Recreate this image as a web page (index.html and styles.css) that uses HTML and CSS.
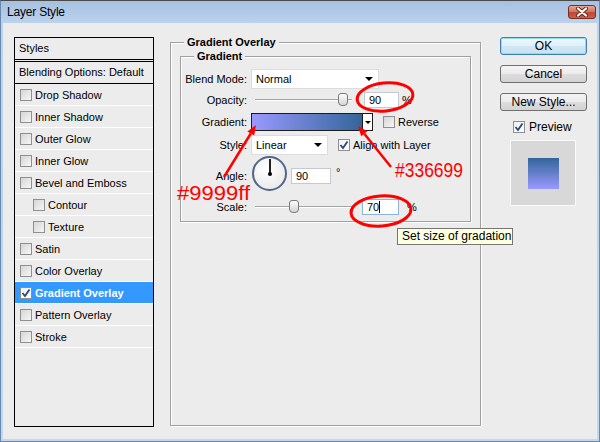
FILE: index.html
```html
<!DOCTYPE html>
<html lang="en">
<head>
  <meta charset="UTF-8">
  <title>Layer Style</title>
  <link rel="stylesheet" href="styles.css">
</head>
<body>

  <div class="window">
    <div class="titlebar">
      <span class="title">Layer Style</span>
      <div class="close-button">
        <svg width="14" height="10" viewBox="0 0 14 10">
          <path d="M3 1.5 L11 8.5 M11 1.5 L3 8.5" stroke="#6b2418" stroke-width="4" stroke-linecap="round"/>
          <path d="M3 1.5 L11 8.5 M11 1.5 L3 8.5" stroke="#ffffff" stroke-width="2.2" stroke-linecap="round"/>
        </svg>
      </div>
    </div>

    <div class="dialog-body">

      <div class="styles-list">
        <div class="list-head">Styles</div>
        <div class="list-blending">Blending Options: Default</div>
        <div class="list-row"><span class="checkbox"></span>Drop Shadow</div>
        <div class="list-row"><span class="checkbox"></span>Inner Shadow</div>
        <div class="list-row"><span class="checkbox"></span>Outer Glow</div>
        <div class="list-row"><span class="checkbox"></span>Inner Glow</div>
        <div class="list-row"><span class="checkbox"></span>Bevel and Emboss</div>
        <div class="list-row sub-row"><span class="checkbox"></span>Contour</div>
        <div class="list-row sub-row"><span class="checkbox"></span>Texture</div>
        <div class="list-row"><span class="checkbox"></span>Satin</div>
        <div class="list-row"><span class="checkbox"></span>Color Overlay</div>
        <div class="list-row selected">
          <span class="checkbox checked">
            <svg width="10" height="10" viewBox="0 0 10 10"><path d="M1.5 5 L4 8 L8.5 1.5" fill="none" stroke="#27497a" stroke-width="1.8"/></svg>
          </span>Gradient Overlay
        </div>
        <div class="list-row"><span class="checkbox"></span>Pattern Overlay</div>
        <div class="list-row"><span class="checkbox"></span>Stroke</div>
      </div>

      <fieldset class="group outer-group">
        <legend>Gradient Overlay</legend>

        <fieldset class="group inner-group">
          <legend>Gradient</legend>

          <div class="field-row row-blend">
            <span class="field-label">Blend Mode:</span>
            <div class="select select-blend">Normal<span class="arrow"></span></div>
          </div>

          <div class="field-row row-opacity">
            <span class="field-label">Opacity:</span>
            <div class="slider"><span class="thumb" style="left: 83px;"></span></div>
            <div class="text-input input-opacity">90</div>
            <span class="unit">%</span>
          </div>

          <div class="field-row row-gradient">
            <span class="field-label">Gradient:</span>
            <div class="gradient-swatch"></div>
            <div class="swatch-arrow"><span class="arrow small"></span></div>
            <span class="checkbox check-reverse"></span>
            <span>Reverse</span>
          </div>

          <div class="field-row row-style">
            <span class="field-label">Style:</span>
            <div class="select select-style">Linear<span class="arrow"></span></div>
            <span class="checkbox checked check-align">
              <svg width="10" height="10" viewBox="0 0 10 10"><path d="M1.5 5 L4 8 L8.5 1.5" fill="none" stroke="#27497a" stroke-width="1.8"/></svg>
            </span>
            <span>Align with Layer</span>
          </div>

          <div class="field-row row-angle">
            <span class="field-label">Angle:</span>
            <div class="dial"><span class="needle"></span><span class="hub"></span></div>
            <div class="text-input input-angle">90</div>
            <span class="degree">°</span>
          </div>

          <div class="field-row row-scale">
            <span class="field-label">Scale:</span>
            <div class="slider"><span class="thumb" style="left: 34px;"></span></div>
            <div class="text-input input-scale">70<span class="caret"></span></div>
            <span class="unit unit-scale">%</span>
          </div>
        </fieldset>
      </fieldset>

      <div class="actions">
        <div class="btn btn-default">OK</div>
        <div class="btn">Cancel</div>
        <div class="btn">New Style...</div>
        <div class="preview-toggle">
          <span class="checkbox checked">
            <svg width="10" height="10" viewBox="0 0 10 10"><path d="M1.5 5 L4 8 L8.5 1.5" fill="none" stroke="#27497a" stroke-width="1.8"/></svg>
          </span>
          Preview
        </div>
        <div class="preview-box"><div class="preview-swatch"></div></div>
      </div>

    </div>
  </div>

  <div class="tooltip">Set size of gradation</div>

  <!-- red notes drawn over the dialog -->
  <svg class="marks" width="600" height="442" viewBox="0 0 600 442">
    <g fill="none" stroke="#ff0000" stroke-width="3">
      <ellipse cx="385" cy="97" rx="28" ry="14" transform="rotate(-6 385 97)"/>
      <ellipse cx="381" cy="211" rx="30" ry="15" transform="rotate(-4 381 211)"/>
    </g>
    <g stroke="#ff0000" stroke-width="2.5">
      <line x1="224" y1="177" x2="250.8" y2="133.5"/>
      <line x1="391" y1="167" x2="364.3" y2="133.8"/>
    </g>
    <g fill="#ff0000">
      <polygon points="256,125 254.2,135.6 247.4,131.4"/>
      <polygon points="358,126 367.4,131.3 361.2,136.3"/>
    </g>
    <g fill="#ff0000" font-family="Liberation Sans, Arial, sans-serif" font-size="21">
      <text x="177" y="200" textLength="73" lengthAdjust="spacingAndGlyphs">#9999ff</text>
      <text x="395" y="177" textLength="68" lengthAdjust="spacingAndGlyphs">#336699</text>
    </g>
  </svg>

</body>
</html>
```

FILE: styles.css
```css
body {
  margin: 0;
  font-family: "Liberation Sans", Arial, sans-serif;
  font-size: 11px;
  color: #000;
}

.window {
  width: 600px;
  height: 442px;
  box-sizing: border-box;
  border: 1px solid #6a87ad;
  border-top-color: #4a4a4a;
  padding: 0 2px 2px 2px;
  background: linear-gradient(#a6c0e0, #bcd3ed 22px, #c3d8ef);
  display: flex;
  flex-direction: column;
}

.titlebar {
  height: 22px;
  flex: none;
  display: flex;
  align-items: center;
  justify-content: space-between;
  padding: 0 1px 0 4px;
}

.title {
  font-size: 12px;
  letter-spacing: -0.2px;
  color: #000;
}

.close-button {
  width: 28px;
  height: 14px;
  box-sizing: border-box;
  border: 1px solid #7a2e22;
  border-radius: 3px;
  background: linear-gradient(#e6a797, #d0705d 50%, #bf4632 55%, #c9624c);
  display: flex;
  align-items: center;
  justify-content: center;
}

.dialog-body {
  flex: 1;
  background-color: #ececec;
  display: flex;
  align-items: flex-start;
  padding: 14px 0 0 11px;
}

/* left list of styles */

.styles-list {
  width: 140px;
  height: 390px;
  box-sizing: border-box;
  border: 1px solid #000;
  flex: none;
}

.list-head {
  height: 21px;
  line-height: 21px;
  padding-left: 4px;
  border-bottom: 3px double #000;
}

.list-blending {
  height: 21px;
  line-height: 21px;
  padding-left: 4px;
  border-bottom: 1px solid #000;
}

.list-row {
  height: 21px;
  display: flex;
  align-items: center;
  padding-left: 5px;
  border-bottom: 1px solid #fff;
}

.list-row .checkbox {
  margin-right: 3px;
}

.sub-row {
  padding-left: 18px;
}

.list-row.selected {
  background-color: #3399ff;
  color: #fff;
  font-weight: bold;
}

.checkbox {
  width: 12px;
  height: 12px;
  box-sizing: border-box;
  border: 1px solid #8e8f8f;
  background: linear-gradient(135deg, #d6d6d6, #f6f6f6);
  display: inline-flex;
  align-items: center;
  justify-content: center;
  flex: none;
}

.checkbox.checked {
  background: linear-gradient(135deg, #f0f0f0, #ffffff);
}

/* middle group boxes */

.group {
  margin: 0;
  box-sizing: border-box;
  min-inline-size: 0;
  border: 1px solid #a0a0a0;
  box-shadow: 1px 1px 0 #fff, inset 1px 1px 0 #fff;
}

.group legend {
  font-weight: bold;
  line-height: 13px;
  padding: 0 3px;
  background-color: #ececec;
}

.outer-group {
  width: 311px;
  height: 390px;
  margin: -1px 0 0 16px;
  padding: 1px 9px 0 9px;
}

.outer-group > legend {
  margin-left: 4px;
}

.inner-group {
  width: 291px;
  padding: 6px 0 2px 0;
}

.inner-group > legend {
  margin-left: 13px;
}

.field-row {
  display: flex;
  align-items: center;
}

.row-blend { height: 20px; }
.row-opacity { height: 22px; }
.row-gradient { height: 22px; }
.row-style { height: 24px; }
.row-angle { height: 38px; }
.row-scale { height: 24px; }

.field-label {
  width: 66px;
  text-align: right;
  margin-right: 4px;
  flex: none;
}

.select {
  height: 20px;
  box-sizing: border-box;
  border: 1px solid #dcdcdc;
  background-color: #fff;
  padding-left: 4px;
  display: flex;
  align-items: center;
  justify-content: space-between;
}

.select-blend {
  width: 128px;
}

.select-style {
  width: 77px;
  margin-right: 10px;
}

.arrow {
  width: 0;
  height: 0;
  border-left: 4px solid transparent;
  border-right: 4px solid transparent;
  border-top: 4px solid #000;
  margin-right: 5px;
}

.arrow.small {
  border-left-width: 3px;
  border-right-width: 3px;
  border-top-width: 3px;
  margin: 0;
}

.slider {
  position: relative;
  width: 97px;
  height: 14px;
  margin-left: 4px;
  flex: none;
}

.slider::before {
  content: "";
  position: absolute;
  left: 0;
  right: 0;
  top: 6px;
  height: 1px;
  background-color: #a3a3a3;
  border-bottom: 1px solid #fff;
}

.thumb {
  position: absolute;
  top: 0;
  width: 10px;
  height: 13px;
  box-sizing: border-box;
  border: 1px solid #7a7a7a;
  border-radius: 3px 3px 4px 4px;
  background: linear-gradient(#fdfdfd, #d4d4d4);
}

.text-input {
  height: 16px;
  box-sizing: border-box;
  border: 1px solid #c5cad2;
  background-color: #fff;
  padding-left: 4px;
  line-height: 14px;
  flex: none;
}

.input-opacity {
  width: 35px;
  margin-left: 12px;
}

.unit {
  margin-left: 3px;
}

.input-angle {
  width: 40px;
  margin-left: 4px;
}

.degree {
  align-self: flex-start;
  margin: 9px 0 0 5px;
}

.input-scale {
  width: 37px;
  margin-left: 10px;
  border-color: #8fb4dc;
  display: flex;
  align-items: center;
}

.caret {
  width: 1px;
  height: 12px;
  background-color: #000;
}

.unit-scale {
  margin-left: 8px;
}

.gradient-swatch {
  width: 112px;
  height: 18px;
  box-sizing: border-box;
  border: 1px solid #1c1c1c;
  background: linear-gradient(to right, #9999ff, #336699);
}

.swatch-arrow {
  width: 10px;
  height: 18px;
  box-sizing: border-box;
  border: 1px solid #1c1c1c;
  border-left: none;
  background-color: #fff;
  display: flex;
  align-items: center;
  justify-content: center;
}

.check-reverse {
  margin: 0 3px 0 10px;
}

.check-align {
  margin-right: 3px;
}

.dial {
  position: relative;
  width: 35px;
  height: 35px;
  box-sizing: border-box;
  margin: 0 0 5px 1px;
  border: 2px solid #52668a;
  border-radius: 50%;
  background: radial-gradient(circle at 40% 35%, #ffffff, #e4e4e4);
  flex: none;
}

.needle {
  position: absolute;
  left: 15px;
  top: 1px;
  width: 2px;
  height: 15px;
  background-color: #222;
}

.hub {
  position: absolute;
  left: 14px;
  top: 14px;
  width: 4px;
  height: 4px;
  border-radius: 50%;
  background-color: #000;
}

/* buttons and preview on the right */

.actions {
  width: 87px;
  margin-left: 19px;
  flex: none;
  font-size: 12px;
}

.btn {
  height: 18px;
  box-sizing: border-box;
  border: 1px solid #707070;
  border-radius: 3px;
  background: linear-gradient(#f4f4f4, #ebebeb 50%, #dddddd 50%, #d3d3d3);
  text-align: center;
  line-height: 16px;
  margin-bottom: 10px;
}

.btn-default {
  border-color: #3c7fb1;
  box-shadow: inset 0 0 0 1px #8fdcf7;
  background: linear-gradient(#eef7fc, #e2f0f8 50%, #d0e8f5 50%, #c6e2f2);
}

.preview-toggle {
  height: 14px;
  margin: -1px 0 0 13px;
  display: flex;
  align-items: center;
}

.preview-toggle .checkbox {
  margin-right: 4px;
}

.preview-box {
  width: 66px;
  height: 66px;
  box-sizing: border-box;
  margin: 6px 0 0 10px;
  border: 1px solid #fafafa;
  background-color: #d8d8d8;
  display: flex;
  align-items: center;
  justify-content: center;
}

.preview-swatch {
  width: 31px;
  height: 31px;
  background: linear-gradient(#336699, #9999ff);
}

/* overlays */

.tooltip {
  position: absolute;
  left: 397px;
  top: 228px;
  width: 116px;
  height: 17px;
  box-sizing: border-box;
  border: 1px solid #767676;
  background-color: #ffffe1;
  font-size: 12px;
  line-height: 15px;
  padding-left: 4px;
  white-space: nowrap;
  overflow: hidden;
}

.marks {
  position: absolute;
  left: 0;
  top: 0;
  pointer-events: none;
}
```
